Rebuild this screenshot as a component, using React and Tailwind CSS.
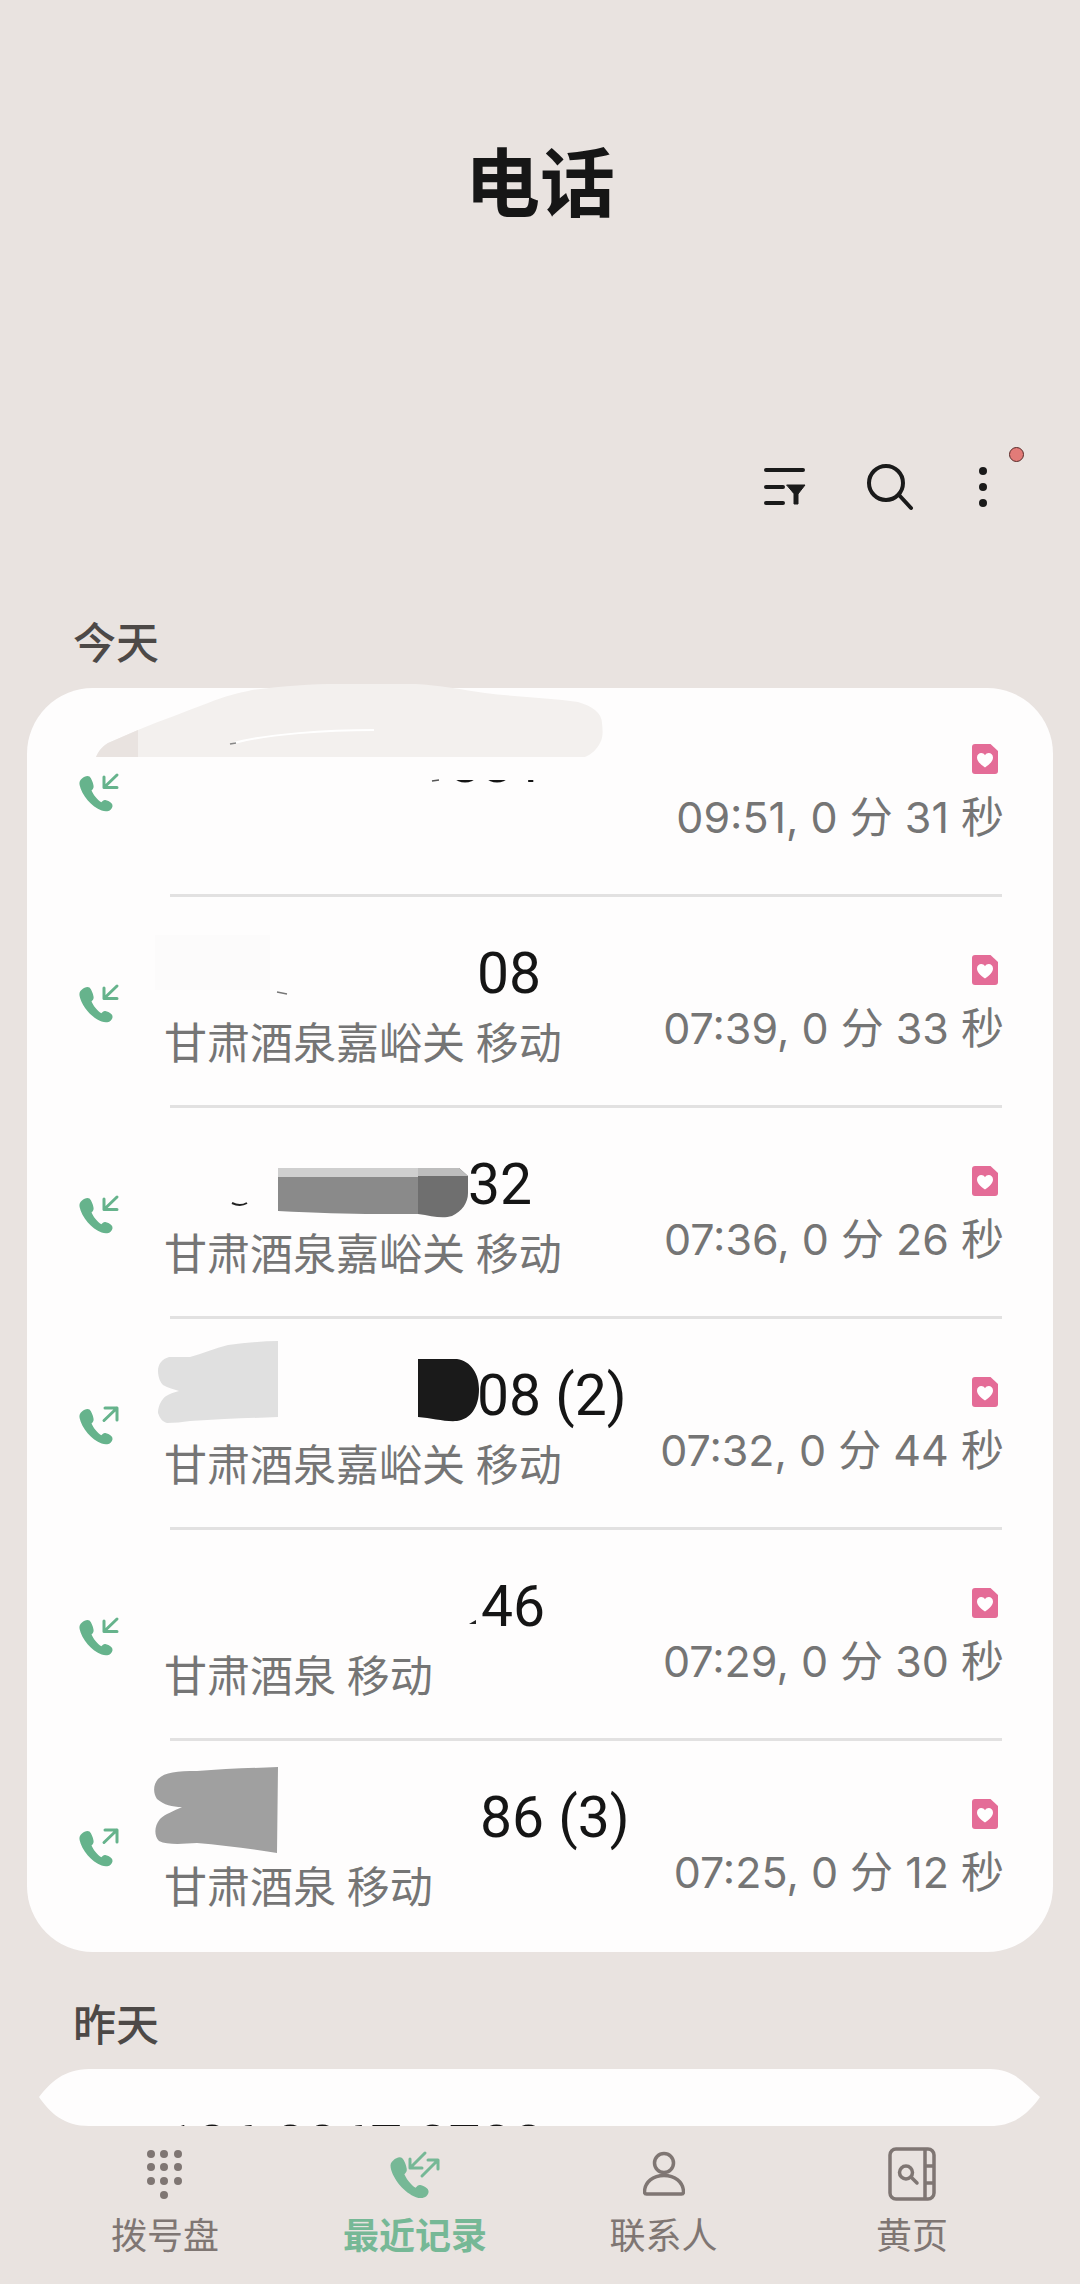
import React from 'react';

const PHONE_GREEN = '#66b38c';
const NAV_GREY = '#7f7673';

const HANDSET = 'M3 5.500C1 7 0 9 .6 12c2 10 12 22 22 25.500 3.500 1.200 7 1 9-.8 2.300-2.200 2.600-5 .7-6.800-1.600-1.500-4-2.700-6-3-1.700-.2-2.800 1-4 2.400-4-2.400-8-7.600-9.800-11.800 1.500-1.300 2.500-3 2-5C14 9.500 12.500 5.500 10.500 3.500 8.500 2 5 3.500 3 5.500z';

const CallIcon = ({ dir }) => (
  <svg width="40" height="40" viewBox="0 0 40 40" className="shrink-0 overflow-visible">
    <path d={HANDSET} fill={PHONE_GREEN} />
    <g fill="none" stroke={PHONE_GREEN} strokeWidth="3" strokeLinecap="round" strokeLinejoin="round">
      {dir === 'in' ? <path d="M38 2L25 14.500M25 4v10.500h13" /> : <path d="M25 14.500L38 2M26 2h12v12" />}
    </g>
  </svg>
);

const HeartTag = () => (
  <svg width="26" height="30" viewBox="0 0 26 30" className="mr-[6px]">
    <path d="M3 0h15.500L26 7v20a3 3 0 0 1-3 3H3a3 3 0 0 1-3-3V3a3 3 0 0 1 3-3z" fill="#e46c97" />
    <path d="M13 23.500C8 20 5 17 5 13.500 5 10.500 7.200 9 9.200 9c1.600 0 3 .8 3.800 2.200C13.800 9.800 15.200 9 16.800 9c2 0 4.200 1.500 4.200 4.500 0 3.500-3 6.500-8 10z" fill="#fff" />
  </svg>
);

// brush marks that hide the phone numbers, drawn over the row (row coords, card left = 0)
const Scribble = ({ children }) => (
  <svg viewBox="0 0 1026 211" className="absolute left-0 top-0 w-[1026px] h-[211px] overflow-visible pointer-events-none">
    {children}
  </svg>
);

const marks = [
  <Scribble key="0">
    <rect x="130" y="65" width="440" height="27" fill="#fefdfd" />
    <path d="M69 69C72 62 76 58 81 55L111 42C135 32 158 24 181 15C198 8 212 5 225 2C255-2 285-4 310-4H388C412-3 436 2 458 5C490 9 525 10 551 14C565 18 575 25 575 35C576 44 576 50 573 55C570 61 565 66 558 69z" fill="#f3f0ee" />
    <path d="M69 69C72 62 76 58 81 55L111 42V69z" fill="#e9e3e0" />
    <path d="M207 55C240 46 300 42 347 42" stroke="#fff" strokeWidth="2" fill="none" />
    <path d="M203 56l6-1" stroke="#888" strokeWidth="1.500" />
    <path d="M405 93l7-1" stroke="#555" strokeWidth="1.500" />
  </Scribble>,
  <Scribble key="1">
    <rect x="128" y="38" width="115" height="55" fill="#fcfbfb" />
    <path d="M250 95l10 2" stroke="#777" strokeWidth="1.500" />
  </Scribble>,
  <Scribble key="2">
    <path d="M205 95q8 4 15 0" stroke="#222" strokeWidth="2" fill="none" />
    <path d="M251 60H391V106H350C320 106 290 105 251 103z" fill="#8a8a8a" />
    <path d="M251 60H391V69H251z" fill="#cfcfcf" />
    <path d="M391 60H432L441 68V85C441 95 435 103 425 108C415 111 405 108 391 106z" fill="#6f6f6f" />
    <path d="M391 60H432L441 68H391z" fill="#bdbdbd" />
  </Scribble>,
  <Scribble key="3">
    <path d="M251 22C235 22 218 24 201 26C188 29 175 35 163 38H142C135 40 131 45 131 52C131 59 134 64 136 66C141 69 147 70 152 72C145 74 139 76 136 80C132 85 131 90 131 94C133 100 136 103 140 104C148 104 155 103 163 102C195 100 225 99 251 98z" fill="#e0e0e0" />
    <path d="M391 40H430C444 42 452 55 452 70C452 88 444 100 430 102C418 103 405 99 391 98z" fill="#1a1a1a" />
  </Scribble>,
  <Scribble key="4">
    <path d="M442 94h7v-4z" fill="#222" />
  </Scribble>,
  <Scribble key="5">
    <path d="M251 26C225 27 195 28 170 30C150 30 138 31 131 38C126 44 126 52 130 58C137 64 145 66 155 66C147 70 138 73 133 78C127 85 127 95 132 100C140 104 155 103 170 102C195 104 225 108 250 112z" fill="#a0a0a0" />
  </Scribble>,
];

const calls = [
  { dir: 'in', num: '881', numPad: 'pl-[285px]', loc: '', time: '09:51, 0 分 31 秒', top: 'pt-[43px] h-[206px]' },
  { dir: 'in', num: '08', numPad: 'pl-[313px]', loc: '甘肃酒泉嘉峪关 移动', time: '07:39, 0 分 33 秒', top: 'pt-[45px] h-[208px]' },
  { dir: 'in', num: '32', numPad: 'pl-[304px]', loc: '甘肃酒泉嘉峪关 移动', time: '07:36, 0 分 26 秒', top: 'pt-[45px] h-[208px]' },
  { dir: 'out', num: '08 (2)', numPad: 'pl-[313px]', loc: '甘肃酒泉嘉峪关 移动', time: '07:32, 0 分 44 秒', top: 'pt-[45px] h-[208px]' },
  { dir: 'in', num: '46', numPad: 'pl-[317px]', loc: '甘肃酒泉 移动', time: '07:29, 0 分 30 秒', top: 'pt-[45px] h-[208px]' },
  { dir: 'out', num: '86 (3)', numPad: 'pl-[316px]', loc: '甘肃酒泉 移动', time: '07:25, 0 分 12 秒', top: 'pt-[45px] h-[211px]' },
];

const CallRow = ({ call, index, last }) => (
  <div className="relative">
    <div className={`flex pl-[52px] pr-[49px] ${call.top}`}>
      <div className="mt-[42px]">
        <CallIcon dir={call.dir} />
      </div>
      <div className="ml-[45px] flex-1 flex flex-col">
        <div className={`h-[64px] leading-[64px] text-[57px] text-[#151515] ${call.numPad}`}>{call.num}</div>
        <div className="mt-[10px] h-[56px] leading-[56px] text-[43px] text-[#757575]">{call.loc}</div>
      </div>
      <div className="flex flex-col items-end">
        <div className="mt-[13px]">
          <HeartTag />
        </div>
        <div className="mt-[15px] h-[56px] leading-[56px] text-[43px] font-[Inter,'Noto_Sans_CJK_SC',sans-serif] text-[#757575] whitespace-nowrap">{call.time}</div>
      </div>
    </div>
    {!last && <div className="ml-[143px] mr-[51px] h-[3px] bg-[#e2e1e1]" />}
    {marks[index]}
  </div>
);

const navItems = [
  {
    label: '拨号盘',
    shift: '',
    icon: (
      <svg width="40" height="54" viewBox="0 0 40 54" fill={NAV_GREY}>
        {[7, 20, 34].map((y) =>
          [6, 19, 33].map((x) => <circle key={`${x}-${y}`} cx={x} cy={y} r="4" />)
        )}
        <circle cx="19" cy="48" r="4" />
      </svg>
    ),
  },
  {
    label: '最近记录',
    active: true,
    shift: '',
    icon: (
      <svg width="52" height="54" viewBox="0 0 52 54">
        <g transform="translate(1 7) scale(1.150)">
          <path d={HANDSET} fill="#76b896" />
        </g>
        <g fill="none" stroke="#76b896" strokeWidth="3" strokeLinecap="round" strokeLinejoin="round">
          <path d="M36 6L21 21M21 12v9h12" />
          <path d="M33 29L49 13M39 13h10v9" />
        </g>
      </svg>
    ),
  },
  {
    label: '联系人',
    shift: 'pr-[3px]',
    icon: (
      <svg width="42" height="54" viewBox="0 0 42 54" fill="none" stroke={NAV_GREY} strokeWidth="3.500">
        <circle cx="21" cy="16" r="9.500" />
        <path d="M3.500 47c-1.500 0-2-1-2-2.500C2 35 10 28.500 21 28.500S40 35 40.500 44.500c0 1.500-.5 2.500-2 2.500z" strokeLinejoin="round" />
      </svg>
    ),
  },
  {
    label: '黄页',
    shift: 'pr-[6px]',
    icon: (
      <svg width="48" height="54" viewBox="0 0 48 54" fill="none" stroke={NAV_GREY} strokeWidth="3.500">
        <rect x="2" y="2" width="44" height="50" rx="6" />
        <path d="M37 2v50M37 19h9M37 36h9" />
        <circle cx="18" cy="25.500" r="6.500" />
        <path d="M23 30l6 6" strokeLinecap="round" />
      </svg>
    ),
  },
];

const App = () => {
  return (
    <div className="w-[1080px] h-[2284px] overflow-hidden bg-[#e9e3e0] font-[Roboto,'Noto_Sans_CJK_SC',sans-serif]">
      <div className="h-[370px] flex items-center justify-center text-[75px] font-bold text-[#161616]">电话</div>

      <div className="mt-[82px] h-[70px] pr-[93px] flex items-center justify-end">
        <svg width="42" height="40" viewBox="0 0 42 40" stroke="#1a1a1a" strokeWidth="4" strokeLinecap="round">
          <path d="M2 3h37M2 20h17M2 36h17" />
          <path d="M23 18h18l-7 9v10h-4V27z" fill="#1a1a1a" strokeWidth="1" strokeLinejoin="round" />
        </svg>
        <svg width="48" height="48" viewBox="0 0 48 48" fill="none" stroke="#1a1a1a" strokeWidth="4" strokeLinecap="round" className="ml-[60px]">
          <circle cx="20" cy="20" r="17" />
          <path d="M33 32l12 13" />
        </svg>
        <div className="relative ml-[65px]">
          <svg width="8" height="40" viewBox="0 0 8 40" fill="#1a1a1a" className="block">
            <circle cx="4" cy="4" r="4" />
            <circle cx="4" cy="20" r="4" />
            <circle cx="4" cy="36" r="4" />
          </svg>
          <span className="absolute left-[30px] top-[-20px] w-[15px] h-[15px] rounded-full bg-[#e27b78] border border-[#5a2a28]" />
        </div>
      </div>

      <div className="mt-[95px] pl-[73px] h-[54px] leading-[54px] text-[43px] font-medium text-[#4d4947]">今天</div>

      <div className="mt-[17px] mx-[27px] rounded-[66px] bg-[#fefdfd]">
        {calls.map((call, i) => (
          <CallRow key={i} call={call} index={i} last={i === calls.length - 1} />
        ))}
      </div>

      <div className="mt-[47px] pl-[73px] h-[54px] leading-[54px] text-[43px] font-medium text-[#4d4947]">昨天</div>

      <div className="mt-[16px] ml-[39px] mr-[40px] h-[57px] overflow-hidden [clip-path:path('M50_0H951C975_0_985_14_1001_28C990_44_975_57_951_57H50C25_57_11_44_0_28C11_14_25_0_50_0Z')] bg-[#fefdfd] pt-[46px] pl-[125px] text-[57px] leading-[64px] text-[#151515] whitespace-nowrap">
        186 8867 0788
      </div>

      <div className="px-[40px] pt-[21px] grid grid-cols-4">
        {navItems.map((item) => (
          <div key={item.label} className={`flex flex-col items-center ${item.shift}`}>
            <div className="h-[54px] flex items-center">{item.icon}</div>
            <div className={`mt-[11px] h-[50px] leading-[50px] text-[36px] ${item.active ? 'font-bold text-[#76b896]' : 'text-[#7f7673]'}`}>
              {item.label}
            </div>
          </div>
        ))}
      </div>
    </div>
  );
};

export default App;
